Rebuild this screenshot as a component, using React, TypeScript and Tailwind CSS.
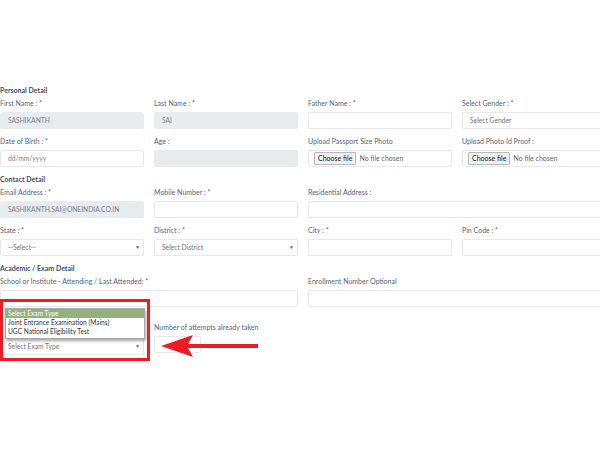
import React from 'react';

// Small form field pieces
function Label({ children }: { children: React.ReactNode }) {
    return <div className="text-[7px] leading-[9px] mb-[4px] text-[#56657a] whitespace-nowrap">{children}</div>;
}

function Input({ value, placeholder, disabled }: { value?: string; placeholder?: string; disabled?: boolean }) {
    return (
        <div
            className={
                disabled
                    ? 'h-[17px] rounded-[2px] border border-[#e9ecef] bg-[#e9ecef] px-[7px] flex items-center text-[6.7px] text-[#7a8089]'
                    : 'h-[17px] rounded-[2px] border border-[#e6e8eb] bg-white px-[7px] flex items-center text-[6.7px] text-[#7a8089]'
            }
        >
            {value || placeholder}
        </div>
    );
}

function Select({ text, arrow }: { text: string; arrow?: boolean }) {
    return (
        <div className="h-[17px] rounded-[2px] border border-[#e6e8eb] bg-white pl-[7px] pr-[3px] flex items-center justify-between text-[6.7px] text-[#6f7680]">
            <span>{text}</span>
            {arrow && <span className="text-[5px] text-[#666]">▼</span>}
        </div>
    );
}

function FileInput() {
    return (
        <div className="h-[17px] rounded-[2px] border border-[#e6e8eb] bg-white px-[5px] flex items-center gap-[3px] text-[7px]">
            <span className="h-[13px] px-[3px] flex items-center bg-[#efefef] border border-[#b9b9b9] rounded-[1px] text-[#222]">Choose file</span>
            <span className="text-[#666]">No file chosen</span>
        </div>
    );
}

function Field({ label, children, span }: { label: string; children: React.ReactNode; span?: boolean }) {
    return (
        <div className={span ? 'col-span-2' : ''}>
            <Label>{label}</Label>
            {children}
        </div>
    );
}

function Heading({ children }: { children: React.ReactNode }) {
    return <div className="text-[7px] leading-[9px] font-bold text-[#3f5068] mb-[4px]">{children}</div>;
}

export default function App() {
    return (
        <div className="relative w-[600px] h-[450px] overflow-hidden bg-white [font-family:Lato,'Liberation_Sans',sans-serif]">
            <div className="w-[606px] pt-[86px]">
                {/* --- Personal --- */}
                <Heading>Personal Detail</Heading>
                <div className="grid grid-cols-4 gap-x-[10px] gap-y-[8px]">
                    <Field label="First Name : *"><Input value="SASHIKANTH" disabled /></Field>
                    <Field label="Last Name : *"><Input value="SAI" disabled /></Field>
                    <Field label="Father Name : *"><Input /></Field>
                    <Field label="Select Gender : *"><Select text="Select Gender" /></Field>
                    <Field label="Date of Birth : *"><Input placeholder="dd/mm/yyyy" /></Field>
                    <Field label="Age :"><Input disabled /></Field>
                    <Field label="Upload Passport Size Photo"><FileInput /></Field>
                    <Field label="Upload Photo Id Proof :"><FileInput /></Field>
                </div>

                {/* --- Contact --- */}
                <div className="mt-[8px]">
                    <Heading>Contact Detail</Heading>
                </div>
                <div className="grid grid-cols-4 gap-x-[10px] gap-y-[8px]">
                    <Field label="Email Address : *"><Input value="SASHIKANTH.SAI@ONEINDIA.CO.IN" disabled /></Field>
                    <Field label="Mobile Number : *"><Input /></Field>
                    <Field label="Residential Address :" span><Input /></Field>
                    <Field label="State : *"><Select text="--Select--" arrow /></Field>
                    <Field label="District : *"><Select text="Select District" arrow /></Field>
                    <Field label="City : *"><Input /></Field>
                    <Field label="Pin Code : *"><Input /></Field>
                </div>

                {/* --- Academic --- */}
                <div className="mt-[8px]">
                    <Heading>Academic / Exam Detail</Heading>
                </div>
                <div className="grid grid-cols-4 gap-x-[10px] gap-y-[8px]">
                    <Field label="School or Institute - Attending / Last Attended: *" span><Input /></Field>
                    <Field label="Enrollment Number Optional" span><Input /></Field>
                </div>

                <div className="mt-[16px] grid grid-cols-4 gap-x-[10px]">
                    {/* label of this select sits under the open list */}
                    <div className="pt-[15px]">
                        <Select text="Select Exam Type" arrow />
                    </div>
                    <Field label="Number of attempts already taken">
                        <div className="w-[47px]"><Input /></div>
                    </Field>
                </div>
            </div>

            {/* open dropdown list */}
            <div className="absolute left-[5px] top-[308px] w-[140px] bg-white border border-[#a9a9a9] shadow-[1px_2px_3px_rgba(0,0,0,0.35)] text-[6.6px] leading-[9px] text-[#333]">
                <div className="bg-[#93b07e] text-white px-[2px]">Select Exam Type</div>
                <div className="px-[2px]">Joint Entrance Examination (Mains)</div>
                <div className="px-[2px] pb-[2px]">UGC National Eligibility Test</div>
            </div>

            {/* red annotation box */}
            <div className="absolute left-0 top-[299px] w-[150px] h-[62px] border-[3px] border-[#ee1b24]" />

            {/* red arrow */}
            <svg className="absolute left-0 top-0" width="600" height="450" viewBox="0 0 600 450">
                <polygon points="161,346 193,335 188,344 258,344 258,348 188,348 193,357" fill="#ee1b24" />
            </svg>
        </div>
    );
}
